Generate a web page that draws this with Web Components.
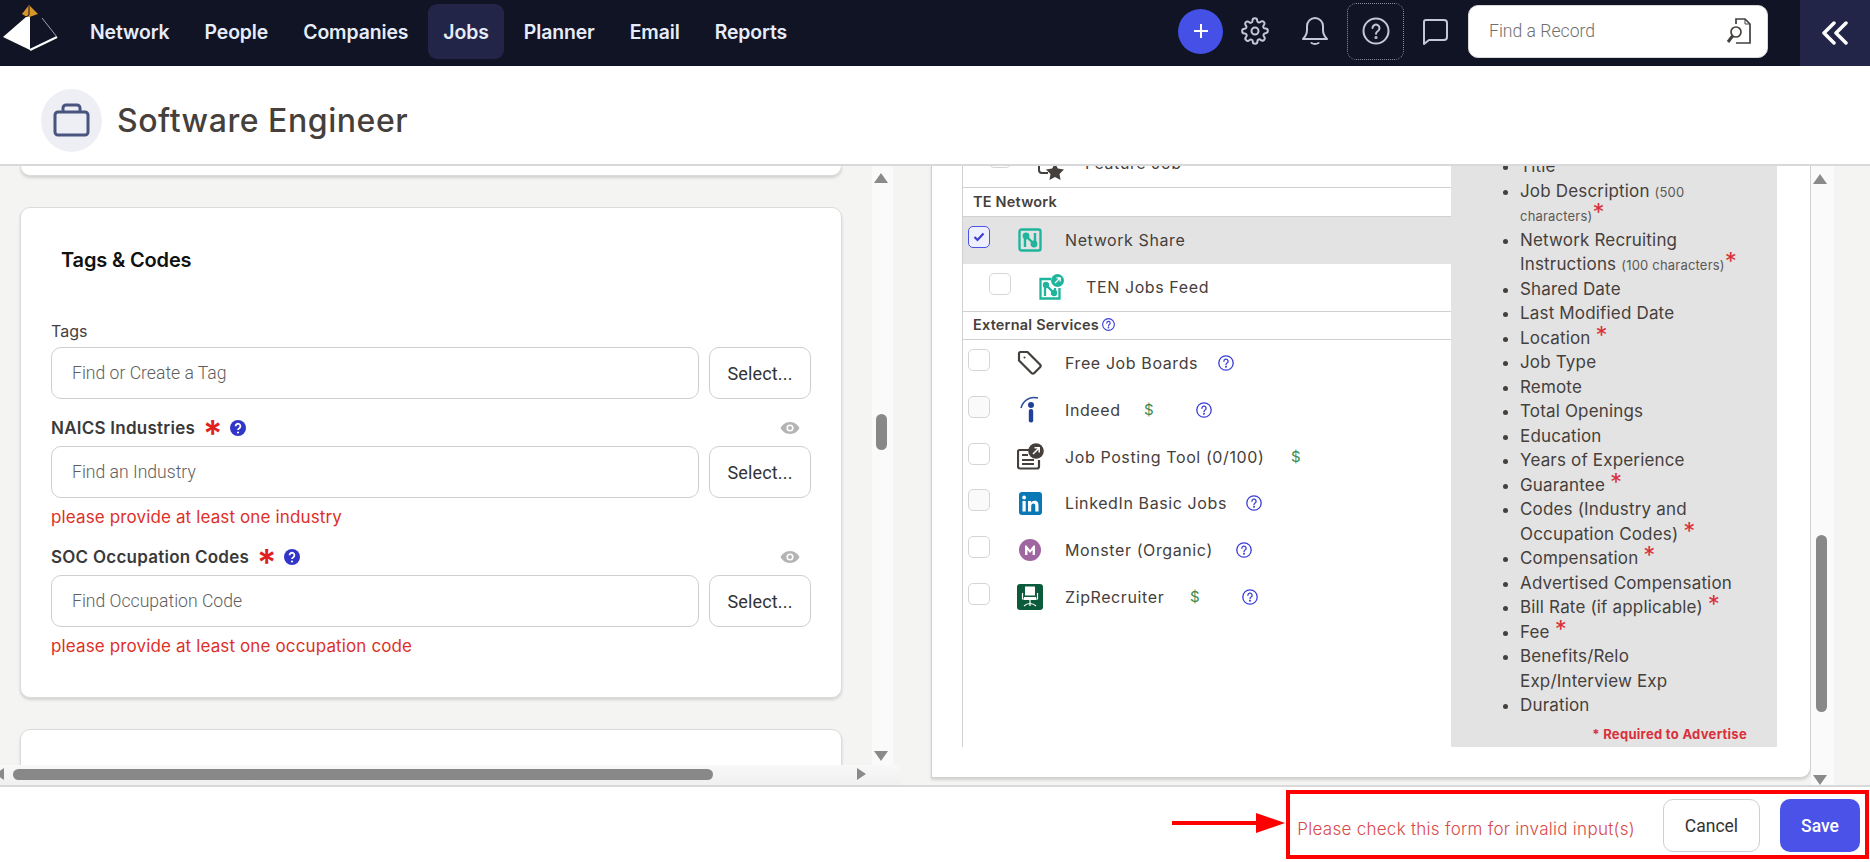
<!doctype html>
<html>
<head>
<meta charset="utf-8">
<title>Software Engineer</title>
<style>
  html, body { margin: 0; height: 100%; overflow: hidden; background: #fff; }
  body { font-family: "Inter", "Liberation Sans", sans-serif; }
</style>
</head>
<body>
<job-app></job-app>

<script>
  // ---- icons ----
  const ICONS = {
    logo: `<svg width="60" height="60" viewBox="0 0 60 60"><path d="M29 5 22 14l6 3.500 10-3.500z" fill="#d8962a"/><path d="M29 6v9l-3 2" fill="none" stroke="#11142a" stroke-width="1"/><path d="M26 17h4v33L3 37z" fill="#fff"/><path d="M30 50 57 37" stroke="#fff" stroke-width="2"/><path d="M42 18 57 37" stroke="#a4a4ae" stroke-width="1"/></svg>`,
    gear: `<svg width="28" height="28" viewBox="0 0 24 24" fill="none" stroke="#c3c8d8" stroke-width="1.7" stroke-linejoin="round"><circle cx="12" cy="12" r="3"/><path d="M19.4 15a1.65 1.65 0 0 0 .33 1.82l.06.06a2 2 0 1 1-2.83 2.83l-.06-.06a1.65 1.65 0 0 0-2.82 1.17V21a2 2 0 1 1-4 0v-.09a1.65 1.65 0 0 0-2.82-1.12l-.06.06a2 2 0 1 1-2.83-2.83l.06-.06a1.65 1.65 0 0 0-1.17-2.82H3a2 2 0 1 1 0-4h.09a1.65 1.65 0 0 0 1.12-2.82l-.06-.06a2 2 0 1 1 2.83-2.83l.06.06a1.65 1.65 0 0 0 2.82-1.17V3a2 2 0 1 1 4 0v.09a1.65 1.65 0 0 0 2.82 1.12l.06-.06a2 2 0 1 1 2.83 2.83l-.06.06a1.65 1.65 0 0 0 1.17 2.82H21a2 2 0 1 1 0 4h-.09a1.65 1.65 0 0 0-1.51 1z"/></svg>`,
    bell: `<svg width="28" height="30" viewBox="0 0 28 30" fill="none" stroke="#c3c8d8" stroke-width="2" stroke-linecap="round" stroke-linejoin="round"><path d="M2 23c2-2 4-5 4-9v-4a8 8 0 0 1 16 0v4c0 4 2 7 4 9z"/><path d="M10.500 27c2.300 1.300 4.700 1.300 7 0"/></svg>`,
    help: `<svg width="28" height="28" viewBox="0 0 28 28" fill="none" stroke="#c3c8d8" stroke-width="2" stroke-linecap="round"><circle cx="14" cy="14" r="12.500"/><path d="M10.500 11a3.500 3.500 0 1 1 5.400 3c-1.300.8-1.900 1.400-1.900 2.800"/><circle cx="14" cy="20.500" r=".6" fill="#c3c8d8"/></svg>`,
    chat: `<svg width="28" height="28" viewBox="0 0 28 28" fill="none" stroke="#c3c8d8" stroke-width="2" stroke-linejoin="round"><path d="M5 3h18a3 3 0 0 1 3 3v14a3 3 0 0 1-3 3H8l-5 4V5a2 2 0 0 1 2-2z"/></svg>`,
    find: `<svg width="26" height="28" viewBox="0 0 26 28" fill="none" stroke="#45403c" stroke-width="1.700"><path d="M10 7V2h9l5 5v19H10"/><path d="M19 2v5h5" stroke-width="1"/><circle cx="10" cy="15" r="5"/><path d="M6.500 19 2 25" stroke-width="3"/></svg>`,
    chevrons: `<svg width="28" height="24" viewBox="0 0 28 24" fill="none" stroke="#fff" stroke-width="3.500" stroke-linecap="round" stroke-linejoin="round"><path d="M13 2 3 12l10 10"/><path d="M25 2 15 12l10 10"/></svg>`,
    brief: `<svg width="37" height="34" viewBox="0 0 37 34" fill="none" stroke="#48557f" stroke-width="3" stroke-linejoin="round"><rect x="2" y="9" width="33" height="23" rx="3"/><path d="M10 9V5a3 3 0 0 1 3-3h11a3 3 0 0 1 3 3v4"/></svg>`,
    eye: `<svg width="20" height="14" viewBox="0 0 20 14"><path d="M10 1C5.500 1 2 4 .5 7 2 10 5.500 13 10 13s8-3 9.500-6C18 4 14.500 1 10 1z" fill="#b4b4b4"/><circle cx="10" cy="7" r="3.600" fill="#fff"/><circle cx="10" cy="7" r="2" fill="#b4b4b4"/></svg>`,
    star: `<svg width="30" height="24" viewBox="0 0 30 24"><path d="M2 1v11a3 3 0 0 0 3 3h6" fill="none" stroke="#45403c" stroke-width="2"/><path d="M18 5l2.800 5.600 6.200.9-4.500 4.400 1.100 6.100-5.600-2.900-5.600 2.900 1.100-6.100L9 11.500l6.200-.9z" fill="#45403c"/></svg>`,
    net: `<svg width="24" height="24" viewBox="0 0 24 24" fill="none" stroke="#1fb59c" stroke-width="2.400"><rect x="1.500" y="1.500" width="21" height="21" rx="2"/><path d="M7 5v14M17 5v14M8 8l8 8"/><circle cx="8" cy="8" r="2.200" fill="#1fb59c"/><circle cx="16" cy="16" r="2.200" fill="#1fb59c"/></svg>`,
    tenfeed: `<svg width="26" height="26" viewBox="0 0 26 26" fill="none" stroke="#1fb59c" stroke-width="2.300"><path d="M13 5H2.500v19.500h19V14"/><path d="M7 9v13M17 14v8M8 11l8 8"/><circle cx="8" cy="11" r="2" fill="#1fb59c"/><circle cx="16" cy="19" r="2" fill="#1fb59c"/><circle cx="19.500" cy="6.500" r="6.500" fill="#1fb59c" stroke="none"/><path d="M17 9l5-5M18.500 3.800h3.700v3.700" stroke="#fff" stroke-width="1.300"/></svg>`,
    tag: `<svg width="25" height="25" viewBox="0 0 25 25" style="margin-left:-2px" fill="none" stroke="#45403c" stroke-width="2.200" stroke-linejoin="round"><path d="M2 3.500A1.500 1.500 0 0 1 3.500 2h7L23 14.500a2 2 0 0 1 0 2.800L17.300 23a2 2 0 0 1-2.800 0L2 10.500z"/><circle cx="7.500" cy="7.500" r="1" fill="#45403c" stroke="none"/></svg>`,
    indeed: `<svg width="20" height="27" viewBox="0 0 20 27"><path d="M1 12C3 5 9 0 18 2" fill="none" stroke="#2c4c9c" stroke-width="1.600"/><circle cx="11" cy="9" r="3" fill="#20409a"/><rect x="8.800" y="13" width="4.400" height="13.500" rx="2" fill="#20409a"/></svg>`,
    posting: `<svg width="27" height="27" viewBox="0 0 27 27" fill="none" stroke="#45403c" stroke-width="2.200"><path d="M13 7H2.500a1.500 1.500 0 0 0-1.500 1.500v15A2 2 0 0 0 3 25.500h17a2 2 0 0 0 2-2V17"/><path d="M5 12h6M5 17h12M5 21h12"/><circle cx="19" cy="8" r="7.800" fill="#45403c" stroke="none"/><path d="M16 11l6-6M17.500 4.800h4.700v4.700" stroke="#fff" stroke-width="1.500"/></svg>`,
    linkedin: `<svg width="23" height="23" viewBox="0 0 23 23"><rect width="23" height="23" rx="3" fill="#0a78b5"/><rect x="3.500" y="9" width="3.200" height="10.500" fill="#fff"/><circle cx="5.100" cy="5.500" r="1.900" fill="#fff"/><path d="M9 9h3v1.600c.7-1.200 2-1.900 3.500-1.900 3 0 4 2 4 4.800v6h-3.200v-5.300c0-1.500-.4-2.700-1.800-2.700s-2.300 1-2.300 2.700v5.300H9z" fill="#fff"/></svg>`,
    monster: `<svg width="22" height="22" viewBox="0 0 22 22"><circle cx="11" cy="11" r="11" fill="#a0669f"/><path d="M6 16V6.500h1.500L11 11l3.500-4.500H16V16h-2.400v-5L11 14l-2.600-3v5z" fill="#fff"/></svg>`,
    zip: `<svg width="26" height="26" viewBox="0 0 26 26"><rect width="26" height="26" rx="3" fill="#0b5a3c"/><path d="M8 2.500h10v9H8z" fill="#fff"/><path d="M5.500 9v6h15V9" fill="none" stroke="#fff" stroke-width="1.200"/><rect x="7" y="13" width="12" height="3" fill="#fff"/><path d="M13 16v6M7 22c2-2 4-2.500 6-2.500s4 .5 6 2.500" fill="none" stroke="#fff" stroke-width="1.200"/></svg>`,
    q: `<svg width="16" height="16" viewBox="0 0 16 16" fill="none" stroke="#3b3fd8" stroke-width="1.300" stroke-linecap="round"><circle cx="8" cy="8" r="7.200"/><path d="M5.900 6.300A2.100 2.100 0 1 1 9.100 8c-.8.500-1.100.9-1.100 1.700"/><circle cx="8" cy="11.800" r=".4" fill="#3b3fd8"/></svg>`,
    qs: `<svg width="13" height="13" viewBox="0 0 16 16" fill="none" stroke="#3b3fd8" stroke-width="1.400" stroke-linecap="round"><circle cx="8" cy="8" r="7.200"/><path d="M5.900 6.300A2.100 2.100 0 1 1 9.100 8c-.8.500-1.100.9-1.100 1.700"/><circle cx="8" cy="11.800" r=".4" fill="#3b3fd8"/></svg>`,
    qfill: `<svg width="16" height="16" viewBox="0 0 16 16"><circle cx="8" cy="8" r="8" fill="#3236c8"/><path d="M5.600 6.200A2.400 2.400 0 1 1 9.300 8.200c-.9.500-1.300.9-1.300 1.800" fill="none" stroke="#fff" stroke-width="1.800"/><circle cx="8" cy="12.500" r="1.100" fill="#fff"/></svg>`
  };

  // ---- top nav ----
  class TopNav extends HTMLElement {
    connectedCallback() {
      const items = ["Network", "People", "Companies", "Jobs", "Planner", "Email", "Reports"];
      this.attachShadow({ mode: "open" }).innerHTML = `
        <style>
          :host { display: flex; height: 66px; background: #111424; align-items: stretch; font-family: Inter, "Liberation Sans", sans-serif; }
          .logo { width: 75px; flex: none; }
          nav { display: flex; gap: 5px; align-items: center; flex: none; }
          nav a { height: 55px; margin-top: -3px; display: flex; align-items: center; padding: 0 15px; color: #e6ecfa; font-size: 19.4px; font-weight: 600; letter-spacing: -.1px; border-radius: 9px; }
          nav a.on { background: #222547; }
          .right { margin-left: auto; display: flex; align-items: stretch; }
          .tools { display: flex; align-items: center; padding-bottom: 4px; }
          .plus { width: 45px; height: 45px; border-radius: 50%; background: #4550e6; color: #fff; display: flex; align-items: center; justify-content: center; margin-right: 18px; }
          .ico { display: flex; justify-content: center; align-items: center; flex: none; }
          .gear { width: 28px; margin-right: 32px; }
          .bell { width: 28px; margin-right: 18px; }
          .help { width: 57px; height: 57px; box-sizing: border-box; border: 1px dotted #8c8f9c; border-radius: 9px; margin-right: 17px; }
          .chat { width: 28px; margin-right: 19px; }
          .search { width: 300px; height: 53px; box-sizing: border-box; background: #fff; border-radius: 10px; display: flex; align-items: center; justify-content: space-between; padding: 0 15px 0 20px; font: 300 17.6px Roboto, sans-serif; color: #6f6f6f; margin-right: 32px; border: 1px solid #d8d8d8; }
          .collapse { width: 70px; background: #222547; display: flex; align-items: center; justify-content: center; }
        </style>
        <div class="logo">${ICONS.logo}</div>
        <nav>${items.map((t) => `<a class="${t === "Jobs" ? "on" : ""}">${t}</a>`).join("")}</nav>
        <div class="right">
          <div class="tools">
            <div class="plus"><svg width="16" height="16" viewBox="0 0 16 16" stroke="#fff" stroke-width="2"><path d="M8 1v14M1 8h14"/></svg></div>
            <div class="ico gear">${ICONS.gear}</div>
            <div class="ico bell">${ICONS.bell}</div>
            <div class="ico help">${ICONS.help}</div>
            <div class="ico chat">${ICONS.chat}</div>
            <div class="search"><span>Find a Record</span>${ICONS.find}</div>
          </div>
          <div class="collapse">${ICONS.chevrons}</div>
        </div>`;
    }
  }
  customElements.define("top-nav", TopNav);

  // ---- title strip ----
  class TitleBar extends HTMLElement {
    connectedCallback() {
      this.attachShadow({ mode: "open" }).innerHTML = `
        <style>
          :host { display: flex; align-items: center; height: 100px; box-sizing: border-box; border-bottom: 2px solid #d9d9d9; padding: 10px 0 0 41px; background: #fff; }
          .c { width: 61px; height: 63px; border-radius: 50%; background: #eeeff4; display: flex; align-items: center; justify-content: center; }
          h1 { margin: 0 0 0 15px; font: 500 32px Inter, "Liberation Sans", sans-serif; color: #45403c; letter-spacing: .55px; }
        </style>
        <div class="c">${ICONS.brief}</div><h1><slot></slot></h1>`;
    }
  }
  customElements.define("title-bar", TitleBar);

  // ---- one labelled lookup field ----
  class LookupField extends HTMLElement {
    connectedCallback() {
      const label = this.getAttribute("label"), req = this.hasAttribute("required");
      const err = this.getAttribute("error");
      this.attachShadow({ mode: "open" }).innerHTML = `
        <style>
          :host { display: block; font-family: Inter, "Liberation Sans", sans-serif; }
          .lbl { display: flex; align-items: center; height: 36px; box-sizing: border-box; padding-top: 4px; color: #45403c; font-size: 16px; }
          .lbl.req { padding-top: 0; font-size: 17px; font-weight: 600; letter-spacing: .25px; color: #3a3a3a; }
          .star { color: #e0201c; font-size: 36px; line-height: 24px; height: 14px; margin: 0 7px 0 8px; font-weight: 600; }
          .eye { margin-left: auto; margin-right: 11px; display: flex; }
          .row { display: flex; gap: 10px; height: 52px; }
          .box { flex: 1; border: 1px solid #cfcfcf; border-radius: 10px; display: flex; align-items: center; padding-left: 20px; font: 300 17.6px Roboto, sans-serif; color: #5e5e5e; box-sizing: border-box; }
          .btn { width: 102px; border: 1px solid #cfcfcf; border-radius: 10px; display: flex; align-items: center; justify-content: center; font: 400 18px Roboto, sans-serif; letter-spacing: .15px; color: #333; box-sizing: border-box; }
          .err { color: #dd3028; font: 400 17px/19px Inter, "Liberation Sans", sans-serif; letter-spacing: .13px; margin-top: 10px; }
        </style>
        <div class="lbl ${req ? "req" : ""}">${label}${req ? `<span class="star">*</span>${ICONS.qfill}<span class="eye">${ICONS.eye}</span>` : ""}</div>
        <div class="row"><div class="box">${this.getAttribute("placeholder")}</div><div class="btn">Select...</div></div>
        ${err ? `<div class="err">${err}</div>` : ""}`;
    }
  }
  customElements.define("lookup-field", LookupField);

  // ---- left form column ----
  class FormPane extends HTMLElement {
    connectedCallback() {
      this.attachShadow({ mode: "open" }).innerHTML = `
        <style>
          :host { display: flex; flex-direction: column; width: 900px; flex: none; background: #f4f4f3; }
          .top { flex: 1; min-height: 0; display: flex; overflow: hidden; }
          .cards { width: 872px; padding-left: 20px; box-sizing: border-box; flex: none; }
          .card { width: 822px; box-sizing: border-box; background: #fff; border: 1px solid #dcdcdc; border-radius: 10px; box-shadow: 0 2px 3px rgba(0,0,0,.14); }
          .stub { height: 10px; border-top: 0; border-radius: 0 0 10px 10px; }
          .main { margin-top: 31px; height: 491px; padding: 0 30px; }
          h2 { margin: 0; padding: 41px 0 0 10px; height: 62px; box-sizing: content-box; font: 600 20px/22px Inter, "Liberation Sans", sans-serif; color: #111; letter-spacing: -.15px; }
          .tail { margin-top: 31px; height: 100px; }
          .vbar { width: 21px; background: #fafafa; flex: none; position: relative; }
          .arrow { width: 0; height: 0; border: 7px solid transparent; position: absolute; left: 2px; }
          .up { border-bottom: 10px solid #8a8a8a; border-top: 0; }
          .down { bottom: 4px; border-top: 10px solid #8a8a8a; border-bottom: 0; }
          .thumb { position: absolute; left: 4px; top: 248px; width: 11px; height: 36px; background: #888; border-radius: 6px; }
          .hbar { height: 20px; flex: none; background: linear-gradient(#f8f8f8, #f0f0f0); position: relative; }
          .hthumb { position: absolute; left: 13px; top: 4px; width: 700px; height: 11px; background: #888; border-radius: 6px; }
          .hl, .hr { position: absolute; top: 3px; width: 0; height: 0; border: 6px solid transparent; }
          .hl { left: -5px; border-right: 9px solid #8a8a8a; border-left: 0; }
          .hr { left: 857px; border-left: 9px solid #8a8a8a; border-right: 0; }
        </style>
        <div class="top">
          <div class="cards">
            <div class="card stub"></div>
            <div class="card main">
              <h2>Tags &amp; Codes</h2>
              <lookup-field label="Tags" placeholder="Find or Create a Tag"></lookup-field>
              <lookup-field label="NAICS Industries" required placeholder="Find an Industry" error="please provide at least one industry" style="margin-top:11px"></lookup-field>
              <lookup-field label="SOC Occupation Codes" required placeholder="Find Occupation Code" error="please provide at least one occupation code" style="margin-top:12px"></lookup-field>
            </div>
            <div class="card tail"></div>
          </div>
          <div class="vbar"><div class="arrow up" style="top:7px"></div><div class="thumb"></div><div class="arrow down"></div></div>
        </div>
        <div class="hbar"><div class="hl"></div><div class="hthumb"></div><div class="hr"></div></div>`;
    }
  }
  customElements.define("form-pane", FormPane);

  // ---- one job board row ----
  class BoardRow extends HTMLElement {
    connectedCallback() {
      const indent = this.hasAttribute("indent"), on = this.hasAttribute("checked");
      const dim = this.hasAttribute("dim"), paid = this.getAttribute("paid"), q = this.getAttribute("help");
      this.attachShadow({ mode: "open" }).innerHTML = `
        <style>
          :host { display: flex; align-items: center; height: 46.8px; position: relative; color: #45403c; font-size: 16px; letter-spacing: .6px; padding-left: ${indent ? 26 : 5}px; box-sizing: border-box; }
          :host([checked]) { background: #e3e3e3; }
          .cb { width: 22px; height: 22px; box-sizing: border-box; border: 1px solid ${on ? "#4a52e8" : "#d5d5d5"}; border-radius: 5px; background: ${on ? "#eef0ff" : dim ? "#fafafa" : "#fff"}; margin-top: -6px; display: flex; align-items: center; justify-content: center; flex: none; }
          .i { width: 40px; margin: 0 15px 0 20px; display: flex; justify-content: center; flex: none; }
          .t { white-space: nowrap; }
          .d, .q { position: absolute; top: 50%; transform: translateY(-50%); display: flex; }
          .d { color: #3d8a4a; font-size: 15px; margin-top: -1px; letter-spacing: 0; }
        </style>
        <div class="cb">${on ? `<svg width="12" height="10" viewBox="0 0 12 10" fill="none" stroke="#3b3fd8" stroke-width="2.200"><path d="M1.500 5 4.500 8 10.500 1.500"/></svg>` : ""}</div>
        <div class="i">${ICONS[this.getAttribute("icon")]}</div>
        <div class="t"><slot></slot></div>
        ${paid ? `<span class="d" style="left:${paid}px">$</span>` : ""}
        ${q ? `<span class="q" style="left:${q}px">${ICONS.q}</span>` : ""}`;
    }
  }
  customElements.define("board-row", BoardRow);

  // ---- right column: boards + advertise list ----
  class BoardPane extends HTMLElement {
    connectedCallback() {
      const star = `<b class="s">*</b>`;
      const fields = [
        "Job Description <small>(500 characters)</small>" + star,
        "Network Recruiting Instructions <small>(100 characters)</small>" + star,
        "Shared Date", "Last Modified Date", "Location " + star, "Job Type", "Remote", "Total Openings",
        "Education", "Years of Experience", "Guarantee " + star, "Codes (Industry and Occupation Codes) " + star,
        "Compensation " + star, "Advertised Compensation", "Bill Rate (if applicable) " + star, "Fee " + star,
        "Benefits/Relo<br>Exp/Interview Exp", "Duration"
      ];
      this.attachShadow({ mode: "open" }).innerHTML = `
        <style>
          :host { display: flex; flex: 1; min-width: 0; background: #f4f4f3; overflow: hidden; font-family: Inter, "Liberation Sans", sans-serif; }
          .wrap { width: 31px; flex: none; }
          .card { width: 880px; height: 613px; box-sizing: border-box; margin-top: -1px; flex: none; background: #fff; border: 1px solid #d0d0d0; border-top: 0; border-radius: 0 0 10px 0; box-shadow: 0 2px 3px rgba(0,0,0,.14); padding-left: 30px; overflow: hidden; display: flex; align-items: flex-start; }
          .list { width: 489px; height: 582px; flex: none; box-sizing: border-box; border-left: 1px solid #d0d0d0; }
          .feat { height: 23px; box-sizing: border-box; overflow: hidden; position: relative; border-bottom: 1px solid #d0d0d0; color: #45403c; }
          .feat span { position: absolute; left: 122px; top: -12px; font-size: 16px; letter-spacing: .6px; }
          .feat .cb { position: absolute; left: 26px; top: -19px; width: 22px; height: 22px; box-sizing: border-box; border: 1px solid #d5d5d5; border-radius: 5px; }
          .feat svg { position: absolute; left: 74px; top: -7px; }
          .head { display: flex; align-items: center; gap: 3px; padding: 0 0 2px 10px; font-size: 14.5px; font-weight: 600; color: #45403c; letter-spacing: .2px; height: 29px; border-bottom: 1px solid #d0d0d0; box-sizing: border-box; }
          .head.ext { border-top: 1px solid #d0d0d0; }
          .side { width: 326px; height: 582px; flex: none; background: #e3e3e3; overflow: hidden; position: relative; color: #45403c; font-size: 17px; letter-spacing: .17px; }
          ul { margin: -11px 0 0; padding: 0 0 0 69px; line-height: 24.5px; list-style: disc; width: 228px; box-sizing: content-box; }
          small { font-size: 13px; line-height: 0; color: #5c5855; letter-spacing: .2px; }
          .s { color: #d9303a; font-size: 24px; line-height: 0; font-weight: 400; }
          .req { position: absolute; right: 30px; bottom: 5px; font-size: 13px; font-weight: 700; color: #d9303a; letter-spacing: .3px; }
          .vbar { width: 23px; flex: none; background: #fafafa; position: relative; }
          .up, .down { position: absolute; left: 2px; width: 0; height: 0; border: 7px solid transparent; }
          .up { top: 8px; border-bottom: 10px solid #8a8a8a; border-top: 0; }
          .down { bottom: 0; border-top: 10px solid #8a8a8a; border-bottom: 0; }
          .thumb { position: absolute; left: 5px; top: 369px; width: 11px; height: 177px; background: #888; border-radius: 6px; }
        </style>
        <div class="wrap"></div>
        <div class="card">
          <div class="list">
            <div class="feat"><div class="cb"></div>${ICONS.star}<span>Feature Job</span></div>
            <div class="head">TE Network</div>
            <board-row icon="net" checked>Network Share</board-row>
            <board-row icon="tenfeed" indent>TEN Jobs Feed</board-row>
            <div class="head ext">External Services ${ICONS.qs}</div>
            <board-row icon="tag" help="255">Free Job Boards</board-row>
            <board-row icon="indeed" dim paid="181" help="233">Indeed</board-row>
            <board-row icon="posting" paid="328">Job Posting Tool (0/100)</board-row>
            <board-row icon="linkedin" dim help="283">LinkedIn Basic Jobs</board-row>
            <board-row icon="monster" help="273">Monster (Organic)</board-row>
            <board-row icon="zip" paid="227" help="279">ZipRecruiter</board-row>
          </div>
          <div class="side">
            <ul><li>Title</li>${fields.map((f) => `<li>${f}</li>`).join("")}</ul>
            <div class="req">* Required to Advertise</div>
          </div>
        </div>
        <div class="vbar"><div class="up"></div><div class="thumb"></div><div class="down"></div></div>`;
    }
  }
  customElements.define("board-pane", BoardPane);

  // ---- footer ----
  class FormFooter extends HTMLElement {
    connectedCallback() {
      this.attachShadow({ mode: "open" }).innerHTML = `
        <style>
          :host { display: flex; align-items: center; justify-content: flex-end; height: 77px; box-sizing: border-box; border-top: 2px solid #d9d9d9; background: #fff; padding: 2px 10px 0 0; position: relative; }
          .msg { font: 300 17px Inter, "Liberation Sans", sans-serif; color: #d94a4a; margin: 6px 28px 0 0; letter-spacing: .28px; }
          .b { height: 53px; border-radius: 10px; display: flex; align-items: center; justify-content: center; font: 400 17.5px Roboto, sans-serif; box-sizing: border-box; }
          .cancel { width: 97px; border: 1px solid #cfcfcf; color: #333; margin-right: 20px; }
          .save { width: 80px; background: #4a52e8; color: #fff; font-weight: 500; }
          .rect { position: absolute; left: 1286px; top: 3px; width: 583px; height: 69px; box-sizing: border-box; border: 4px solid #f00; }
          .arrow { position: absolute; left: 1172px; top: 26px; }
        </style>
        <div class="msg">Please check this form for invalid input(s)</div>
        <div class="b cancel">Cancel</div>
        <div class="b save">Save</div>
        <div class="rect"></div>
        <svg class="arrow" width="113" height="20" viewBox="0 0 113 20"><path d="M0 8h84V0l29 10-29 10v-8H0z" fill="#f00"/></svg>`;
    }
  }
  customElements.define("form-footer", FormFooter);

  // ---- page shell ----
  class JobApp extends HTMLElement {
    connectedCallback() {
      this.attachShadow({ mode: "open" }).innerHTML = `
        <style>
          :host { display: flex; flex-direction: column; height: 862px; width: 1870px; overflow: hidden; }
          main { flex: 1; min-height: 0; display: flex; }
        </style>
        <top-nav></top-nav>
        <title-bar>Software Engineer</title-bar>
        <main><form-pane></form-pane><board-pane></board-pane></main>
        <form-footer></form-footer>`;
    }
  }
  customElements.define("job-app", JobApp);
</script>
</body>
</html>
